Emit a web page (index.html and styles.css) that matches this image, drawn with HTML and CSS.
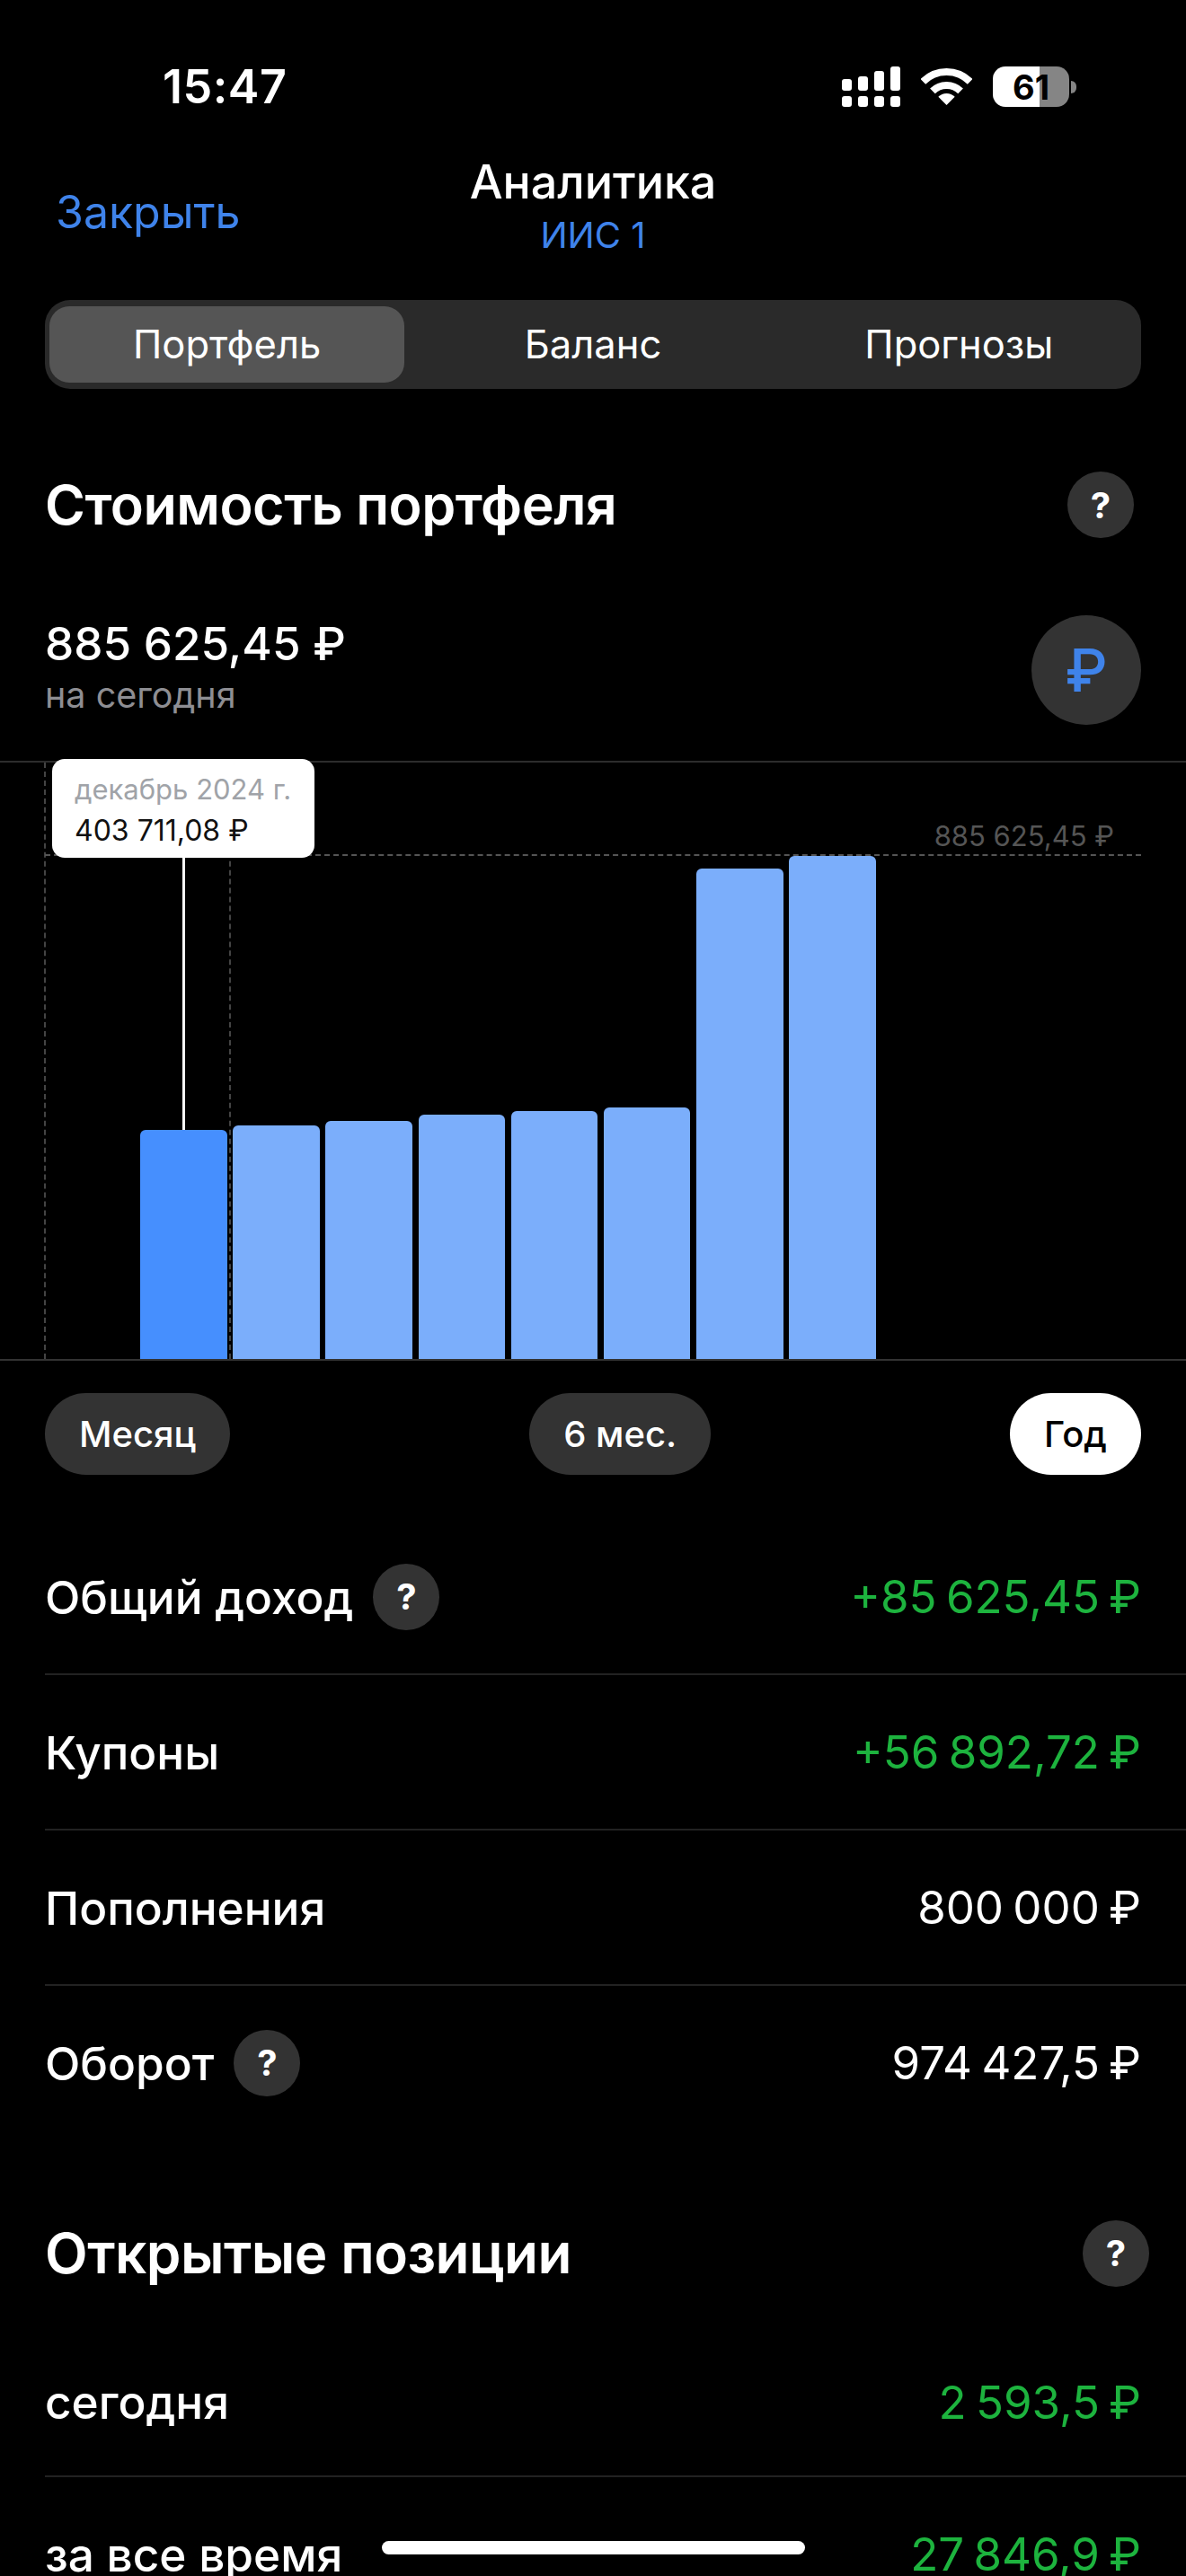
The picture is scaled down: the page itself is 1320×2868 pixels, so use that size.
FILE: index.html
```html
<!DOCTYPE html>
<html lang="ru">
<head>
    <meta charset="UTF-8">
    <meta name="viewport" content="width=device-width, initial-scale=1.0">
    <title>Аналитика</title>
    <link rel="stylesheet" href="styles.css">
</head>
<body>
    <div class="screen">
        <div class="status-bar">
            <span class="time">15:47</span>
            <div class="status-icons">
                <div class="signal">
                    <div class="signal-col"><i class="bar-1"></i><i class="dot"></i></div>
                    <div class="signal-col"><i class="bar-2"></i><i class="dot"></i></div>
                    <div class="signal-col"><i class="bar-3"></i><i class="dot"></i></div>
                    <div class="signal-col"><i class="bar-4"></i><i class="dot"></i></div>
                </div>
                <svg class="wifi" viewBox="0 0 57 41" width="57" height="41">
                    <path d="M2.34 14.84A37 37 0 0 1 54.66 14.84" fill="none" stroke="#fff" stroke-width="8"/>
                    <path d="M12.94 25.44A22 22 0 0 1 44.06 25.44" fill="none" stroke="#fff" stroke-width="8"/>
                    <path d="M28.5 41L19.3 31.8A13 13 0 0 1 37.7 31.8Z" fill="#fff"/>
                </svg>
                <div class="battery">
                    <div class="battery-body"><span>61</span></div>
                    <div class="battery-nub"></div>
                </div>
            </div>
        </div>

        <div class="nav">
            <a class="nav-close">Закрыть</a>
            <div class="nav-title">
                <div class="nav-name">Аналитика</div>
                <div class="nav-sub">ИИС 1</div>
            </div>
        </div>

        <div class="tabs">
            <div class="tab active">Портфель</div>
            <div class="tab">Баланс</div>
            <div class="tab">Прогнозы</div>
        </div>

        <div class="section-head">
            <h2>Стоимость портфеля</h2>
            <div class="help">?</div>
        </div>

        <div class="summary">
            <div>
                <div class="summary-value">885 625,45 ₽</div>
                <div class="summary-label">на сегодня</div>
            </div>
            <div class="currency">₽</div>
        </div>

        <div class="chart">
            <div class="bars">
                <div class="bar selected" style="height: 255px"></div>
                <div class="bar" style="height: 260px"></div>
                <div class="bar" style="height: 265px"></div>
                <div class="bar" style="height: 272px"></div>
                <div class="bar" style="height: 276px"></div>
                <div class="bar" style="height: 280px"></div>
                <div class="bar" style="height: 546px"></div>
                <div class="bar" style="height: 560px"></div>
            </div>
            <div class="guide-v guide-left"></div>
            <div class="guide-v guide-right"></div>
            <div class="guide-h"></div>
            <div class="guide-label">885 625,45 ₽</div>
            <div class="pointer"></div>
            <div class="tooltip">
                <div class="tooltip-date">декабрь 2024 г.</div>
                <div class="tooltip-value">403 711,08 ₽</div>
            </div>
        </div>

        <div class="periods">
            <div class="period">Месяц</div>
            <div class="period">6 мес.</div>
            <div class="period active">Год</div>
        </div>

        <div class="rows">
            <div class="row">
                <div class="row-name">Общий доход <div class="help">?</div></div>
                <div class="row-value green">+85 625,45 ₽</div>
            </div>
            <div class="row">
                <div class="row-name">Купоны</div>
                <div class="row-value green">+56 892,72 ₽</div>
            </div>
            <div class="row">
                <div class="row-name">Пополнения</div>
                <div class="row-value">800 000 ₽</div>
            </div>
            <div class="row last">
                <div class="row-name">Оборот <div class="help">?</div></div>
                <div class="row-value">974 427,5 ₽</div>
            </div>
        </div>

        <div class="section-head open">
            <h2>Открытые позиции</h2>
            <div class="help">?</div>
        </div>

        <div class="rows">
            <div class="row short">
                <div class="row-name">сегодня</div>
                <div class="row-value green">2 593,5 ₽</div>
            </div>
            <div class="row">
                <div class="row-name">за все время</div>
                <div class="row-value green">27 846,9 ₽</div>
            </div>
        </div>

        <div class="home-indicator"></div>
    </div>
</body>
</html>
```

FILE: styles.css
```css
body {
    margin: 0;
    background: #000;
    color: #fff;
    font-family: 'Inter', 'Noto Sans', sans-serif;
}
.screen {
    position: relative;
    height: 2868px;
    overflow: hidden;
    background: #000;
}

/* Status bar */
.status-bar {
    display: flex;
    justify-content: space-between;
    align-items: center;
    height: 45px;
    padding: 74px 122px 0 181px;
}
.time {
    font-size: 52px;
    font-weight: 600;
    letter-spacing: 0.5px;
}
.status-icons {
    display: flex;
    align-items: center;
    gap: 23px;
}
.signal {
    display: flex;
    gap: 7px;
}
.signal-col {
    display: flex;
    flex-direction: column;
    justify-content: flex-end;
    gap: 6px;
    width: 11px;
    height: 45px;
}
.signal-col i {
    display: block;
    background: #fff;
    border-radius: 3px;
}
.signal-col .dot { height: 12px; }
.signal-col .bar-1 { height: 13px; }
.signal-col .bar-2 { height: 16px; }
.signal-col .bar-3 { height: 22px; }
.signal-col .bar-4 { height: 27px; }
.battery {
    display: flex;
    align-items: center;
    gap: 2px;
}
.battery-body {
    display: flex;
    justify-content: center;
    align-items: center;
    width: 85px;
    height: 45px;
    border-radius: 14px;
    background: linear-gradient(to right, #fff 61%, #858585 61%);
    color: #000;
    font-size: 38px;
    font-weight: 700;
}
.battery-nub {
    width: 6px;
    height: 14px;
    background: #858585;
    border-radius: 0 6px 6px 0;
}

/* Nav */
.nav {
    display: flex;
    justify-content: center;
    align-items: center;
    position: relative;
    height: 113px;
    margin-top: 56px;
    padding-bottom: 7px;
}
.nav-close {
    position: absolute;
    left: 62px;
    top: 31px;
    font-size: 50px;
    color: #3f83ea;
}
.nav-title {
    text-align: center;
}
.nav-name {
    font-size: 52px;
    font-weight: 500;
    line-height: 60px;
}
.nav-sub {
    font-size: 40px;
    color: #3f83ea;
    line-height: 58px;
}

/* Tabs */
.tabs {
    display: grid;
    grid-template-columns: repeat(3, 1fr);
    gap: 12px;
    margin: 39px 50px 0;
    padding: 7px 5px;
    height: 85px;
    background: #2a2a2a;
    border-radius: 28px;
}
.tab {
    display: flex;
    justify-content: center;
    align-items: center;
    font-size: 43.5px;
    border-radius: 22px;
    padding-bottom: 2px;
}
.tab.active {
    background: #555;
}

/* Sections */
.section-head {
    display: flex;
    justify-content: space-between;
    align-items: center;
    margin-top: 92px;
    padding: 0 58px 0 50px;
}
.section-head.open {
    margin-top: 89px;
    padding-right: 41px;
}
h2 {
    margin: 0;
    font-size: 61px;
    font-weight: 600;
    letter-spacing: -0.5px;
}
.section-head.open h2 {
    font-size: 62px;
}
.help {
    display: flex;
    justify-content: center;
    align-items: center;
    flex-shrink: 0;
    width: 74px;
    height: 74px;
    border-radius: 50%;
    background: #333;
    color: #fff;
    font-size: 40px;
    font-weight: 700;
}

/* Summary */
.summary {
    display: flex;
    justify-content: space-between;
    align-items: center;
    margin-top: 86px;
    padding: 0 50px;
}
.summary-value {
    font-size: 51.2px;
    font-weight: 500;
    line-height: 56px;
}
.summary-label {
    font-size: 39.5px;
    color: #8e8e93;
    line-height: 60px;
}
.currency {
    display: flex;
    justify-content: center;
    align-items: center;
    width: 122px;
    height: 122px;
    border-radius: 50%;
    background: #333;
    color: #3f83ea;
    font-size: 66px;
    font-weight: 500;
}

/* Chart */
.chart {
    position: relative;
    height: 664px;
    margin-top: 40px;
    border-top: 2px solid #2c2c2c;
    border-bottom: 2px solid #333;
}
.bars {
    display: flex;
    align-items: flex-end;
    gap: 6.7px;
    height: 100%;
    padding-left: 156px;
}
.bar {
    width: 96.5px;
    background: #7baefb;
    border-radius: 6px 6px 0 0;
}
.bar.selected {
    background: #468ffe;
}
.guide-v {
    position: absolute;
    top: 0;
    bottom: 0;
    border-left: 2px dashed #444;
}
.guide-left { left: 49px; }
.guide-right { left: 255px; }
.guide-h {
    position: absolute;
    top: 102px;
    left: 50px;
    right: 50px;
    border-top: 2px dashed #555;
}
.guide-label {
    position: absolute;
    top: 63px;
    right: 80px;
    font-size: 31px;
    color: #555;
}
.pointer {
    position: absolute;
    left: 203px;
    top: 106px;
    width: 3px;
    height: 303px;
    background: #fff;
}
.tooltip {
    position: absolute;
    left: 58px;
    top: -4px;
    width: 292px;
    height: 110px;
    box-sizing: border-box;
    padding: 12px 0 0 25px;
    background: #fff;
    border-radius: 14px;
    font-size: 31px;
    white-space: nowrap;
}
.tooltip-date {
    color: #a0a3a8;
    line-height: 44px;
}
.tooltip-value {
    color: #111;
    font-size: 32px;
    line-height: 48px;
}

/* Periods */
.periods {
    display: flex;
    justify-content: space-between;
    margin-top: 36px;
    padding: 0 50px;
}
.period {
    display: flex;
    align-items: center;
    height: 91px;
    padding: 0 38px;
    border-radius: 46px;
    background: #333;
    font-size: 40px;
    font-weight: 500;
}
.period.active {
    background: #fff;
    color: #000;
}

/* Rows */
.rows {
    margin-top: 50px;
}
.section-head + .rows {
    margin-top: 46px;
}
.row {
    display: flex;
    justify-content: space-between;
    align-items: center;
    height: 171px;
    margin-left: 50px;
    padding-right: 50px;
    border-bottom: 2px solid #222;
}
.row.last {
    border-bottom: none;
}
.row.short {
    height: 164px;
}
.row-name {
    display: flex;
    align-items: center;
    gap: 22px;
    font-size: 51.3px;
    font-weight: 500;
}
.row-value {
    font-size: 51px;
    word-spacing: -4px;
}
.green {
    color: #1db33e;
}

.home-indicator {
    position: absolute;
    left: 425px;
    top: 2829px;
    width: 471px;
    height: 15px;
    background: #fff;
    border-radius: 8px;
}
```
